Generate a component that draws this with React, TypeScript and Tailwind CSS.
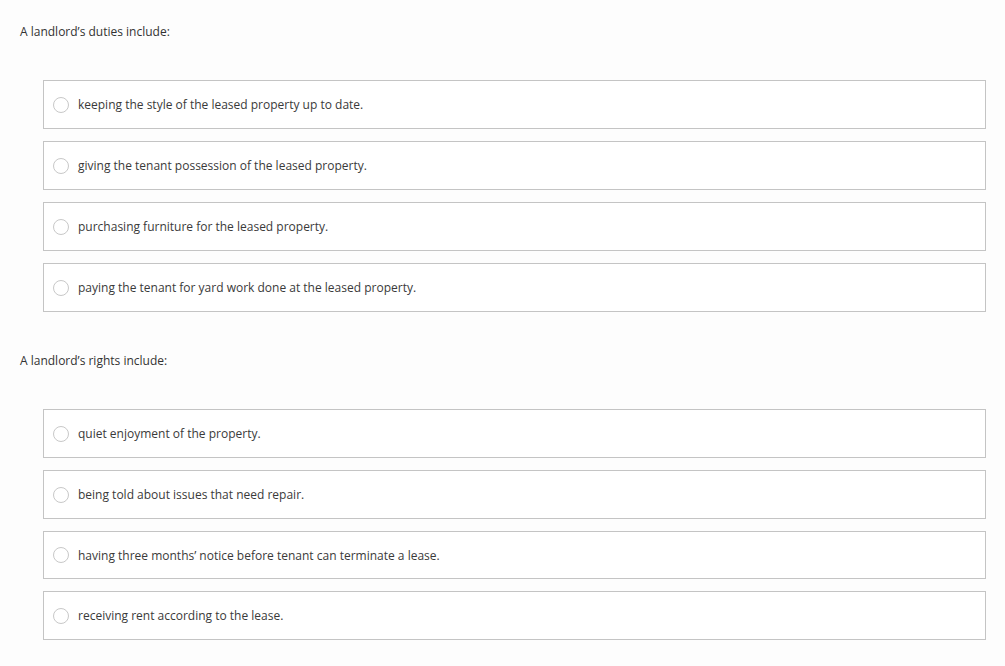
import React from "react";

const groups = [
  {
    q: "A landlord’s duties include:",
    opts: [
      "keeping the style of the leased property up to date.",
      "giving the tenant possession of the leased property.",
      "purchasing furniture for the leased property.",
      "paying the tenant for yard work done at the leased property.",
    ],
  },
  {
    q: "A landlord’s rights include:",
    opts: [
      "quiet enjoyment of the property.",
      "being told about issues that need repair.",
      "having three months’ notice before tenant can terminate a lease.",
      "receiving rent according to the lease.",
    ],
  },
];

export default function App() {
  return (
    <div
      className="min-h-[666px] w-[1005px] bg-[#fdfdfd] pl-[20px] pt-[24px] text-[12px] text-[#333333]"
      style={{ fontFamily: '"Open Sans", "Liberation Sans", sans-serif' }}
    >
      {groups.map((g, gi) => (
        <div key={gi} className={gi > 0 ? "mt-[41px]" : ""}>
          <div className="h-[16px] leading-[16px]">{g.q}</div>
          <div className="mt-[40px] ml-[23px] flex flex-col gap-[12px]">
            {g.opts.map((o, oi) => (
              <div
                key={oi}
                className={
                  "flex w-[943px] items-center border border-[#c4c4c4] bg-white pl-[9px] " +
                  (gi === 1 && oi === 2 ? "h-[48px]" : "h-[49px]")
                }
              >
                <span className="h-[16px] w-[16px] shrink-0 rounded-full border border-[#c8c8c8] bg-white" />
                <span className="ml-[9px] pt-[1px] leading-[16px] text-[#3a3a3a]">{o}</span>
              </div>
            ))}
          </div>
        </div>
      ))}
    </div>
  );
}
